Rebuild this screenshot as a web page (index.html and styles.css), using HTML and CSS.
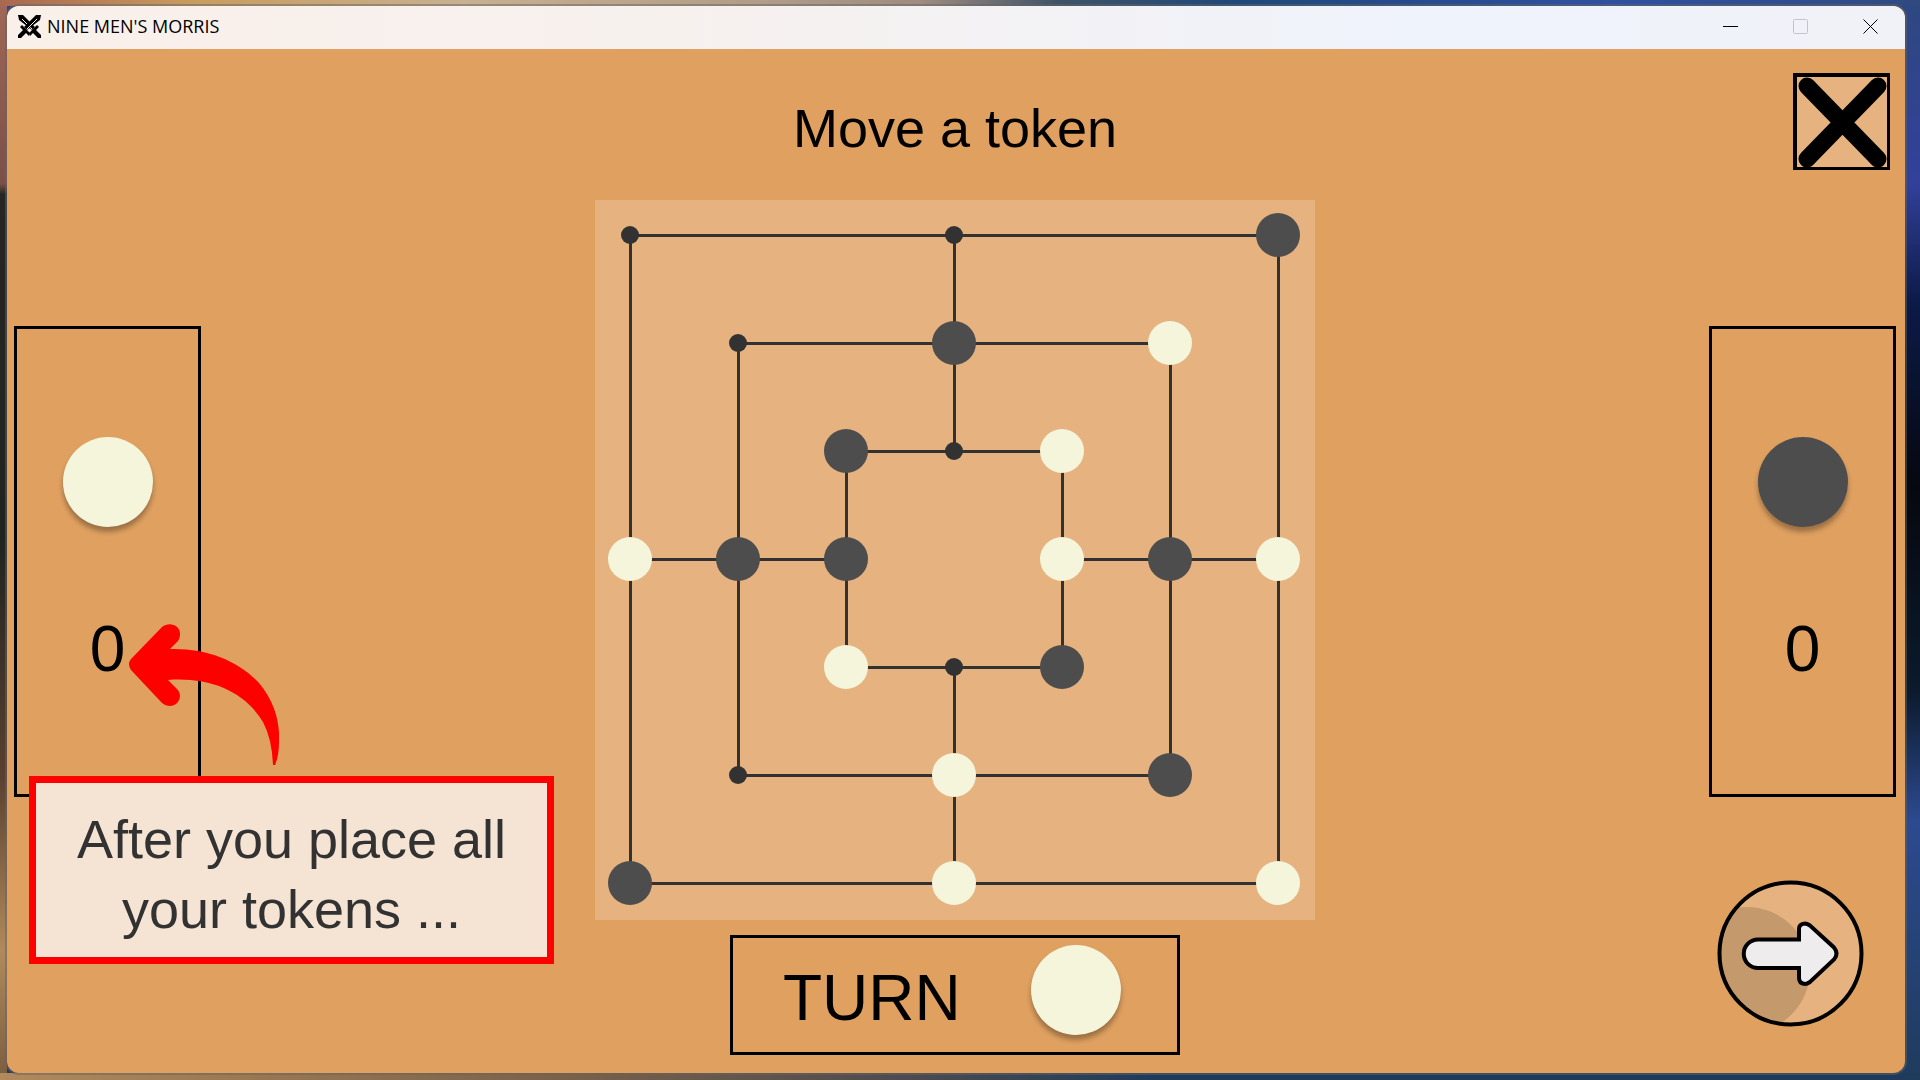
FILE: index.html
```html
<!DOCTYPE html>
<html lang="en">
<head>
<meta charset="utf-8">
<title>NINE MEN'S MORRIS</title>
<link rel="stylesheet" href="styles.css">
</head>
<body>
<div class="window">
  <header class="titlebar">
    <svg class="app-icon" viewBox="0 0 23 23" aria-hidden="true">
      <g>
        <path d="M0 0H5L17 12L14 15L1 5Z"/>
        <path d="M19 10L21 12L18 15L23 20V23H20L15 18L12 21L11 18L17 12Z"/>
        <path class="icon-groove" d="M4 4L14 14"/>
      </g>
      <g transform="matrix(-1 0 0 1 23 0)">
        <path d="M0 0H5L17 12L14 15L1 5Z"/>
        <path d="M19 10L21 12L18 15L23 20V23H20L15 18L12 21L11 18L17 12Z"/>
        <path class="icon-groove" d="M4 4L14 14"/>
      </g>
    </svg>
    <span class="app-title">NINE MEN'S MORRIS</span>
    <div class="window-controls">
      <button class="control" aria-label="Minimize"><svg viewBox="0 0 15 15"><path d="M0 7.5H15"/></svg></button>
      <button class="control" aria-label="Maximize" disabled><svg viewBox="0 0 15 15"><rect x="0.5" y="0.5" width="14" height="14" rx="1"/></svg></button>
      <button class="control" aria-label="Close window"><svg viewBox="0 0 15 15"><path d="M0.5 0.5L14.5 14.5M14.5 0.5L0.5 14.5"/></svg></button>
    </div>
  </header>

  <main class="game">
    <aside class="side side-left">
      <section class="panel" aria-label="Light tokens left">
        <span class="token token-light"></span>
        <span class="count">0</span>
      </section>
    </aside>

    <div class="center">
      <h1 class="message">Move a token</h1>
      <svg class="board" viewBox="0 0 720 720" role="img" aria-label="Board">
        <g class="lines">
          <rect x="35.5" y="35.5" width="648" height="648"/>
          <rect x="143.5" y="143.5" width="432" height="432"/>
          <rect x="251.5" y="251.5" width="216" height="216"/>
          <path d="M359.5 35V251M359.5 467V683M35 359.5H251M467 359.5H683"/>
        </g>
        <g class="spots">
          <circle cx="35" cy="35" r="9"/>
          <circle cx="359" cy="35" r="9"/>
          <circle cx="143" cy="143" r="9"/>
          <circle cx="359" cy="251" r="9"/>
          <circle cx="359" cy="467" r="9"/>
          <circle cx="143" cy="575" r="9"/>
        </g>
        <g class="men-dark">
          <circle cx="683" cy="35" r="22"/>
          <circle cx="359" cy="143" r="22"/>
          <circle cx="251" cy="251" r="22"/>
          <circle cx="143" cy="359" r="22"/>
          <circle cx="251" cy="359" r="22"/>
          <circle cx="575" cy="359" r="22"/>
          <circle cx="467" cy="467" r="22"/>
          <circle cx="575" cy="575" r="22"/>
          <circle cx="35" cy="683" r="22"/>
        </g>
        <g class="men-light">
          <circle cx="575" cy="143" r="22"/>
          <circle cx="467" cy="251" r="22"/>
          <circle cx="35" cy="359" r="22"/>
          <circle cx="467" cy="359" r="22"/>
          <circle cx="683" cy="359" r="22"/>
          <circle cx="251" cy="467" r="22"/>
          <circle cx="359" cy="575" r="22"/>
          <circle cx="359" cy="683" r="22"/>
          <circle cx="683" cy="683" r="22"/>
        </g>
      </svg>
      <section class="turn">
        <span class="turn-label">TURN</span>
        <span class="token token-light"></span>
      </section>
    </div>

    <aside class="side side-right">
      <button class="quit" aria-label="Quit">
        <svg viewBox="0 0 90 90"><path d="M10 9L81 82M81 9L10 82"/></svg>
      </button>
      <section class="panel" aria-label="Dark tokens left">
        <span class="token token-dark"></span>
        <span class="count">0</span>
      </section>
      <button class="next" aria-label="Next">
        <svg viewBox="0 0 147 147">
          <defs><clipPath id="disc"><circle cx="73.5" cy="73.5" r="71"/></clipPath></defs>
          <circle class="next-face" cx="73.5" cy="73.5" r="71"/>
          <circle class="next-shade" cx="30" cy="90" r="63" clip-path="url(#disc)"/>
          <circle class="next-ring" cx="73.5" cy="73.5" r="71"/>
          <path class="next-arrow" d="M41 59.500H82V49Q82 44 88 43.500Q90 43.500 93 45.500L117 67.500Q122 73.500 117 79.500L93 102Q90 104 88 104Q82 103.500 82 98V88H41A14.250 14.250 0 0 1 41 59.500Z"/>
        </svg>
      </button>
    </aside>

    <div class="hint">
      <svg class="hint-arrow" viewBox="0 0 150 142" aria-hidden="true">
        <path d="M33 3C40 -3 52 1 51 11Q51 14 49 17L41 25C78 24 110 37 130 59C146 78 151 99 150 118Q150 132 146 141H144Q143 115 134 98C116 68 82 53 39 56L49 66Q53 72 49 78C45 83 38 83 33 79L2 46Q-2 40 2 35Z"/>
      </svg>
      <p class="hint-text">After you place all<br>your tokens ...</p>
    </div>
  </main>
</div>
</body>
</html>
```
FILE: styles.css
```css
* {
  box-sizing: border-box;
}

body {
  margin: 0;
  min-height: 100vh;
  padding: 6px 15px 7px 7px;
  font-family: "Liberation Sans", Arial, sans-serif;
  color: #000;
  background:
    linear-gradient(to right, #a86850, #c89c60 10%, #c8b090 24%, #b09c88 40%, #a08c80 48%, #405468 55%, #204878 64%, #3050a0 84%, #304a80) top / 100% 6px no-repeat,
    linear-gradient(to right, #b08a5c, #7a6048 30%, #4a4a50 48%, #1f3b5c 60%, #1f3b5c) bottom / 100% 7px no-repeat,
    linear-gradient(to bottom, #a06858, #7a5048 17%, #262624 18%, #20241f 50%, #5a4030 72%, #b08a5c 88%, #7a5c40) left / 7px 100% no-repeat,
    linear-gradient(to bottom, #2e4880, #32409a 17%, #0c1a48 28%, #05080f 45%, #0c1a2c 64%, #2c4a90 76%, #1f3b5c) #1f3b5c;
}

button {
  padding: 0;
  border: 0;
  background: none;
  color: inherit;
}

svg {
  display: block;
}

.window {
  display: flex;
  flex-direction: column;
  min-height: calc(100vh - 13px);
  border-radius: 12px;
  overflow: hidden;
  background: #dfa060;
  box-shadow: 0 0 0 2px rgba(100, 100, 100, 0.5);
}

.titlebar {
  display: flex;
  align-items: center;
  height: 43px;
  padding: 0 0 3px 11px;
  background: linear-gradient(to right, #faf0ea, #f7f1ee 35%, #eff3fc 75%, #f1f2f8);
}

.app-icon {
  width: 23px;
  height: 23px;
}

.icon-groove {
  stroke: #f9f0eb;
  stroke-width: 1;
}

.app-title {
  margin-left: 6px;
  font-family: "Open Sans", "Noto Sans", sans-serif;
  font-size: 18px;
  line-height: 24px;
}

.window-controls {
  display: flex;
  margin-left: auto;
}

.control {
  display: flex;
  align-items: center;
  justify-content: center;
  width: 70px;
  height: 40px;
}

.control svg {
  width: 15px;
  height: 15px;
  fill: none;
  stroke: #000;
  stroke-width: 1;
}

.control:disabled svg {
  stroke: #c4c4c8;
}

.game {
  position: relative;
  flex: 1;
  display: grid;
  grid-template-columns: 1fr minmax(0, 720px) 1fr;
  padding: 0 9px 0 7px;
}

.side {
  display: grid;
  grid-template-rows: 1fr auto 1fr;
}

.side-left .panel {
  grid-row: 2;
}

.side-right {
  justify-items: end;
}

.panel {
  display: flex;
  flex-direction: column;
  align-items: center;
  gap: 85px;
  width: 187px;
  padding: 108px 0;
  border: 3px solid #000;
}

.token {
  width: 90px;
  height: 90px;
  border-radius: 50%;
  box-shadow: 0 5px 5px rgba(0, 0, 0, 0.3);
}

.token-light {
  background: #f5f5dc;
}

.token-dark {
  background: #4d4d4d;
}

.count,
.turn-label {
  font-size: 64px;
  line-height: 74px;
}

.center {
  display: flex;
  flex-direction: column;
  align-items: center;
}

.message {
  margin: 0;
  padding: 48px 0 41px;
  font-size: 54px;
  font-weight: 400;
  line-height: 62px;
}

.board {
  width: 100%;
  background: #e6b280;
}

.lines {
  fill: none;
  stroke: #323232;
  stroke-width: 3;
}

.spots {
  fill: #323232;
}

.men-dark {
  fill: #4d4d4d;
}

.men-light {
  fill: #f5f5dc;
}

.turn {
  display: flex;
  align-items: center;
  justify-content: space-between;
  width: 450px;
  height: 120px;
  margin: 15px 0 18px;
  padding: 6px 56px 0 50px;
  border: 3px solid #000;
}

.turn .token {
  margin-bottom: 16px;
}

.quit {
  width: 97px;
  height: 97px;
  margin: 24px 6px 0 0;
  border: solid #000;
  border-width: 4px 3px 3px 4px;
  background: #e6b280;
}

.quit svg {
  width: 100%;
  stroke: #000;
  stroke-width: 17;
  stroke-linecap: round;
}

.next {
  align-self: end;
  width: 147px;
  margin: 0 32px 46px 0;
}

.next-face {
  fill: #e6b280;
}

.next-shade {
  fill: #c4996c;
}

.next-ring {
  fill: none;
  stroke: #000;
  stroke-width: 4;
}

.next-arrow {
  fill: #efecee;
  stroke: #000;
  stroke-width: 4;
}

.hint {
  position: absolute;
  left: 22px;
  bottom: 109px;
  width: 525px;
}

.hint-arrow {
  width: 150px;
  height: 142px;
  margin: 0 0 10px 100px;
  fill: #f00;
}

.hint-text {
  margin: 0;
  padding: 21px 0 13px;
  border: 7px solid #f00;
  background: #f5e4d3;
  color: #323232;
  font-size: 54px;
  line-height: 70px;
  text-align: center;
}
```
